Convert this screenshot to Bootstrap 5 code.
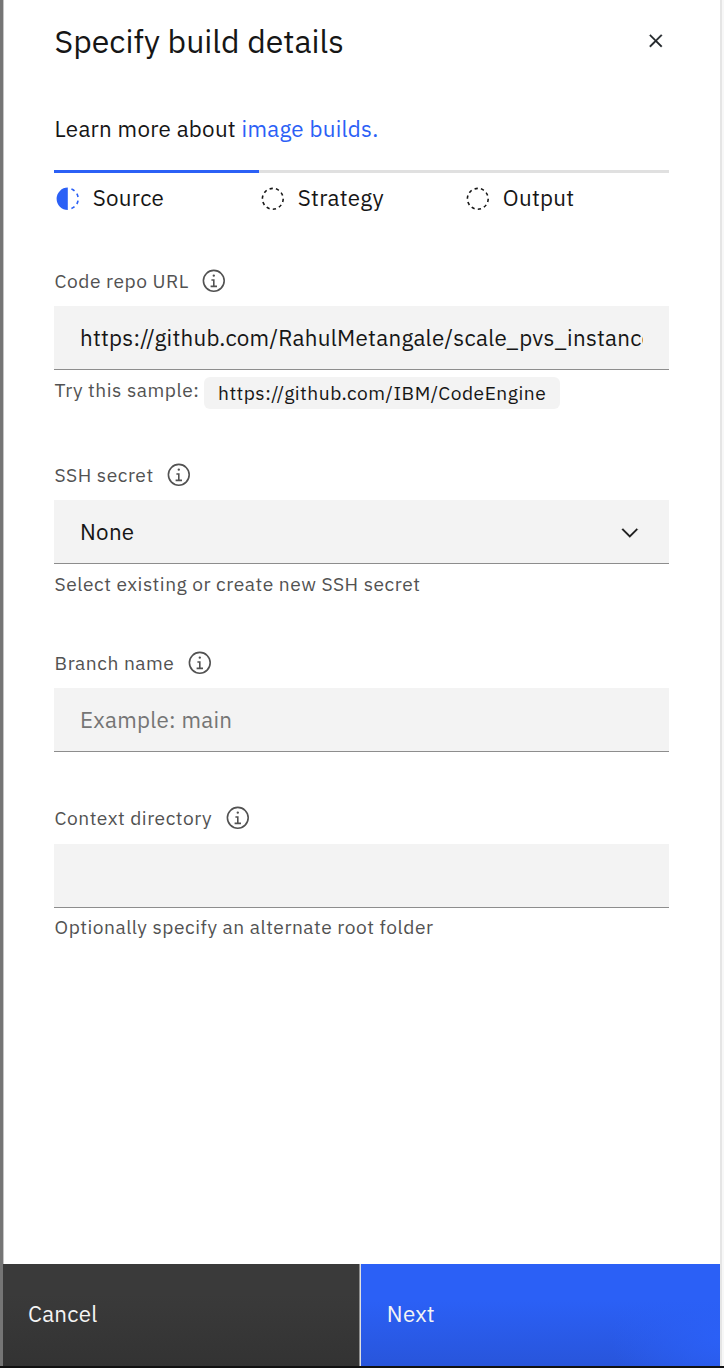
<!DOCTYPE html>
<html lang="en">
<head>
<meta charset="utf-8">
<meta name="viewport" content="width=device-width, initial-scale=1">
<title>Specify build details</title>
<link href="https://cdn.jsdelivr.net/npm/bootstrap@5.3.0/dist/css/bootstrap.min.css" rel="stylesheet">
<style>
:root { --ink: #161616; --ink-soft: #525252; --field: #f3f3f3; --blue: #2b60f6; }
body { font-family: "IBM Plex Sans", Roboto, "Liberation Sans", sans-serif; color: var(--ink); font-size: 22.4px; line-height: 28px; letter-spacing: .256px; background: #fff; }
svg { width: 25.6px; height: 25.6px; fill: currentColor; flex: none; }
.page { border-bottom: 2px solid #111; }
.edge-left { width: 4px; background: linear-gradient(90deg, #757575 3px, #c6c6c6 3px); }
.edge-right { width: 4px; background: linear-gradient(90deg, #e5e5e5 2px, #f7f7f7 2px); }
.panel-body { padding: 19px 51px 0 50px; }
.panel-title { font-size: 32px; line-height: 44px; font-weight: 400; letter-spacing: 0; padding-left: .6px; }
.close-button { padding: 0; }
.close-button svg { stroke: currentColor; stroke-width: .4; }
.intro { margin-top: 52px; padding-left: .6px; }
.intro a { color: var(--blue); }
.steps { margin-top: 27px; margin-bottom: 56px; }
.step-item { border-top: 3px solid #e0e0e0; padding-top: 11px; gap: 12.8px; }
.step-item.current { border-color: var(--blue); }
.step-item svg { margin: 2px -.1px 0 .5px; }
.step-item.current svg { color: var(--blue); }
.field-group { height: 194px; }
.group-ssh { height: 188px; }
.group-branch { height: 155px; }
.group-label { font-size: 19.2px; line-height: 26px; letter-spacing: .512px; color: var(--ink-soft); gap: 12.6px; height: 26px; margin-bottom: 12px; padding-left: .6px; }
.group-context .group-label { margin-bottom: 13px; }
.text-box, .text-box:focus { height: 64px; background: var(--field); color: var(--ink); border: 0; border-bottom: 1px solid #8d8d8d; border-radius: 0; padding: 0 25.6px 0 26px; font-size: 22.4px; line-height: 28px; letter-spacing: .256px; box-shadow: none; }
.text-box::placeholder { color: #757575; }
.secret-menu { padding: 1px 26.6px 0 26px; }
.secret-menu svg { margin-top: 2px; stroke: currentColor; stroke-width: .2; }
.hint { font-size: 19.2px; line-height: 26px; letter-spacing: .512px; color: var(--ink-soft); margin-top: 7px; padding-left: .6px; }
.group-context .hint { margin-top: 6px; }
.sample { background: var(--field); color: var(--ink); border-radius: 6px; padding: 3px 13.6px; height: 32px; margin-left: 5px; }
.actions { height: 102px; margin-left: -1px; }
.action-button, .action-button:hover { color: #f4f4f4; border: 0; border-radius: 0; font-size: 22.4px; line-height: 28px; letter-spacing: .256px; padding: 0 25px 2px; }
.cancel-button, .cancel-button:hover { width: 356px; background: linear-gradient(#3a3a3a 30%, #333); }
.next-button, .next-button:hover { background: radial-gradient(ellipse 110px 80px at 100% 70%, #2b60f6, transparent), linear-gradient(#2b60f6 35%, #2855db); color: #f4f4f4; padding-left: 25.8px; }
.button-divider { width: 2px; background: linear-gradient(90deg, #8d8d8d 1px, #e0e0e0 1px); }
</style>
</head>
<body>
<svg class="d-none" aria-hidden="true">
  <symbol id="icon-info" viewBox="0 0 32 32"><path d="M17 22V14H13V16H15V22H12V24H20V22ZM16 8a1.5 1.5 0 1 0 1.5 1.5A1.5 1.5 0 0 0 16 8ZM16 30A14 14 0 1 1 30 16 14 14 0 0 1 16 30Zm0-26A12 12 0 1 0 28 16 12 12 0 0 0 16 4Z"/></symbol>
  <symbol id="icon-pending" viewBox="0 0 32 32"><path d="M7.7 4.7a14.7 14.7 0 0 0-3 3.1L6.3 9A13.26 13.26 0 0 1 8.9 6.3ZM4.6 12.3l-1.9-.6A12.51 12.51 0 0 0 2 16H4A11.48 11.48 0 0 1 4.6 12.3ZM2.7 20.4a14.4 14.4 0 0 0 2 3.9l1.6-1.2a12.89 12.89 0 0 1-1.7-3.3ZM7.8 27.3a14.4 14.4 0 0 0 3.9 2l.6-1.9A12.89 12.89 0 0 1 9 25.7ZM11.7 2.7l.6 1.9A11.48 11.48 0 0 1 16 4V2A12.51 12.51 0 0 0 11.7 2.7ZM24.2 27.3a15.18 15.18 0 0 0 3.1-3.1L25.7 23A11.53 11.53 0 0 1 23 25.7ZM27.4 19.7l1.9.6A15.47 15.47 0 0 0 30 16H28A11.48 11.48 0 0 1 27.4 19.7ZM29.2 11.6a14.4 14.4 0 0 0-2-3.9L25.6 8.9a12.89 12.89 0 0 1 1.7 3.3ZM24.1 4.6a14.4 14.4 0 0 0-3.9-2l-.6 1.9a12.89 12.89 0 0 1 3.3 1.7ZM20.3 29.3l-.6-1.9A11.48 11.48 0 0 1 16 28v2A21.42 21.42 0 0 0 20.3 29.3Z"/></symbol>
  <symbol id="icon-half" viewBox="0 0 32 32"><path d="M23.76 6.86l1.29-1.53A13.98 13.98 0 0 0 20.87 2.89l-.69 1.88A11.97 11.97 0 0 1 23.76 6.86ZM27.81 14l1.97-.41A13.89 13.89 0 0 0 28.14 9.05L26.41 10A12.52 12.52 0 0 1 27.81 14ZM20.18 27.24l.69 1.87a13.98 13.98 0 0 0 4.18-2.44l-1.29-1.53A11.97 11.97 0 0 1 20.18 27.24ZM26.41 22L28.14 23a14.14 14.14 0 0 0 1.64-4.59L27.81 18.07A12.15 12.15 0 0 1 26.41 22ZM16 30V2a14 14 0 0 0 0 28Z"/></symbol>
</svg>

<div class="page d-flex vh-100">
  <div class="edge-left"></div>
  <main class="flex-grow-1 d-flex flex-column">
    <div class="panel-body flex-grow-1">
      <header class="d-flex justify-content-between align-items-center">
        <h1 class="panel-title mb-0">Specify build details</h1>
        <button type="button" class="btn close-button border-0 d-flex" aria-label="Close"><svg viewBox="0 0 32 32"><path d="M17.41 16 24 9.41 22.59 8 16 14.59 9.41 8 8 9.41 14.59 16 8 22.59 9.41 24 16 17.41 22.59 24 24 22.59Z"/></svg></button>
      </header>
      <p class="intro mb-0">Learn more about <a href="#" class="text-decoration-none">image builds.</a></p>
      <div class="steps row g-0">
        <div class="col-4 step-item current d-flex align-items-start"><svg><use href="#icon-half"/></svg><span>Source</span></div>
        <div class="col-4 step-item d-flex align-items-start"><svg><use href="#icon-pending"/></svg><span>Strategy</span></div>
        <div class="col-4 step-item d-flex align-items-start"><svg><use href="#icon-pending"/></svg><span>Output</span></div>
      </div>

      <div class="field-group">
        <label class="group-label d-flex align-items-center" for="repo">Code repo URL <svg><use href="#icon-info"/></svg></label>
        <input id="repo" class="form-control text-box" type="text" value="https://github.com/RahulMetangale/scale_pvs_instance">
        <div class="hint d-flex align-items-start"><span>Try this sample:</span><span class="sample">https://github.com/IBM/CodeEngine</span></div>
      </div>

      <div class="field-group group-ssh">
        <div class="group-label d-flex align-items-center">SSH secret <svg><use href="#icon-info"/></svg></div>
        <button type="button" class="btn text-box secret-menu w-100 d-flex align-items-center justify-content-between">None <svg viewBox="0 0 16 16"><path d="M8 11 3 6 3.7 5.3 8 9.6 12.3 5.3 13 6Z"/></svg></button>
        <div class="hint">Select existing or create new SSH secret</div>
      </div>

      <div class="field-group group-branch">
        <label class="group-label d-flex align-items-center" for="branch">Branch name <svg><use href="#icon-info"/></svg></label>
        <input id="branch" class="form-control text-box" type="text" placeholder="Example: main">
      </div>

      <div class="group-context">
        <label class="group-label d-flex align-items-center" for="context">Context directory <svg><use href="#icon-info"/></svg></label>
        <input id="context" class="form-control text-box" type="text">
        <div class="hint">Optionally specify an alternate root folder</div>
      </div>
    </div>
    <footer class="actions d-flex">
      <button type="button" class="btn action-button cancel-button text-start">Cancel</button>
      <div class="button-divider"></div>
      <button type="button" class="btn action-button next-button flex-grow-1 text-start">Next</button>
    </footer>
  </main>
  <div class="edge-right"></div>
</div>
<script src="https://cdn.jsdelivr.net/npm/bootstrap@5.3.0/dist/js/bootstrap.bundle.min.js"></script>
</body>
</html>
